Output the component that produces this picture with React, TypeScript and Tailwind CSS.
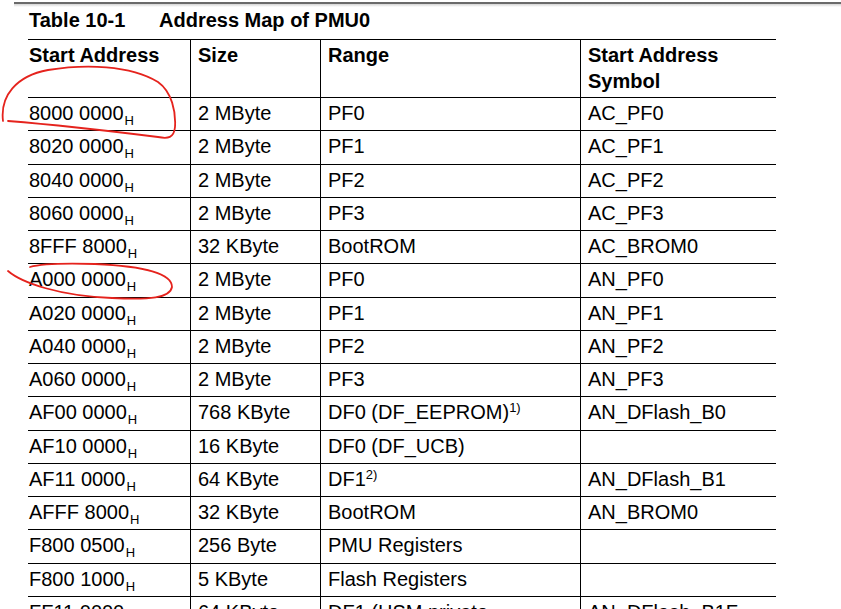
import React from 'react';

type Row = {
  addr: string;
  size: string;
  range: string;
  sup?: string;
  symbol: string;
};

const rows: Row[] = [
  { addr: '8000 0000', size: '2 MByte', range: 'PF0', symbol: 'AC_PF0' },
  { addr: '8020 0000', size: '2 MByte', range: 'PF1', symbol: 'AC_PF1' },
  { addr: '8040 0000', size: '2 MByte', range: 'PF2', symbol: 'AC_PF2' },
  { addr: '8060 0000', size: '2 MByte', range: 'PF3', symbol: 'AC_PF3' },
  { addr: '8FFF 8000', size: '32 KByte', range: 'BootROM', symbol: 'AC_BROM0' },
  { addr: 'A000 0000', size: '2 MByte', range: 'PF0', symbol: 'AN_PF0' },
  { addr: 'A020 0000', size: '2 MByte', range: 'PF1', symbol: 'AN_PF1' },
  { addr: 'A040 0000', size: '2 MByte', range: 'PF2', symbol: 'AN_PF2' },
  { addr: 'A060 0000', size: '2 MByte', range: 'PF3', symbol: 'AN_PF3' },
  { addr: 'AF00 0000', size: '768 KByte', range: 'DF0 (DF_EEPROM)', sup: '1)', symbol: 'AN_DFlash_B0' },
  { addr: 'AF10 0000', size: '16 KByte', range: 'DF0 (DF_UCB)', symbol: '' },
  { addr: 'AF11 0000', size: '64 KByte', range: 'DF1', sup: '2)', symbol: 'AN_DFlash_B1' },
  { addr: 'AFFF 8000', size: '32 KByte', range: 'BootROM', symbol: 'AN_BROM0' },
  { addr: 'F800 0500', size: '256 Byte', range: 'PMU Registers', symbol: '' },
  { addr: 'F800 1000', size: '5 KByte', range: 'Flash Registers', symbol: '' },
  { addr: 'FF11 0000', size: '64 KByte', range: 'DF1 (HSM private', symbol: 'AN_DFlash_B1F' },
];

const grid = 'grid grid-cols-[162px_130px_260px_196px] border-b border-black';

const App: React.FC = () => {
  return (
    <div
      className="relative h-[609px] w-[841px] overflow-hidden bg-white text-black"
      style={{ fontFamily: '"Liberation Sans", Arial, sans-serif' }}
    >
      {/* window edge */}
      <div className="ml-[14px] mt-[2px] h-[2px] bg-[#6a6a6a]" />
      <div className="ml-[14px] h-[3px] bg-gradient-to-b from-[#d4d4d4] to-white" />

      <div className="pl-[28px]">
        {/* Title */}
        <div className="mt-[2px] flex h-[23px] pl-[1px] text-[20px] font-bold leading-[23px]">
          <span className="w-[130px]">Table 10-1</span>
          <span>Address Map of PMU0</span>
        </div>

        {/* Table */}
        <div className="mt-[7px] w-[748px] border-t border-black text-[20px] leading-[26px]">
          <div className={`${grid} h-[58px] font-bold`}>
            <div className="pl-[1px] pt-[2px]">Start Address</div>
            <div className="border-l border-black pl-[7px] pt-[2px]">Size</div>
            <div className="border-l border-black pl-[7px] pt-[2px]">Range</div>
            <div className="border-l border-black pl-[7px] pt-[2px]">
              Start Address
              <br />
              Symbol
            </div>
          </div>
          {rows.map((r, i) => (
            <div key={i} className={`${grid} h-[33.27px]`}>
              <div className="whitespace-nowrap pl-[1px] pt-[2px]">
                {r.addr}
                <span className="ml-[1px] align-[-5px] text-[13px] leading-none">H</span>
              </div>
              <div className="whitespace-nowrap border-l border-black pl-[7px] pt-[2px]">{r.size}</div>
              <div className="whitespace-nowrap border-l border-black pl-[7px] pt-[2px]">
                {r.range}
                {r.sup && <span className="align-[7px] text-[13px] leading-none">{r.sup}</span>}
              </div>
              <div className="whitespace-nowrap border-l border-black pl-[7px] pt-[2px]">{r.symbol}</div>
            </div>
          ))}
        </div>
      </div>

      {/* hand-drawn red marks */}
      <svg
        className="pointer-events-none absolute left-0 top-0"
        width="841"
        height="609"
        viewBox="0 0 841 609"
        fill="none"
      >
        <path
          d="M 3 121 C 0 96, 16 76, 48 70 C 85 64, 130 65, 158 82 C 172 92, 176 112, 175 127 C 174 138, 168 139, 158 137 C 118 132, 70 126, 8 121"
          stroke="#e5231d"
          strokeWidth="1.8"
          strokeLinecap="round"
        />
        <path
          d="M 8 271 C 22 283, 60 296, 112 298 C 150 300, 170 298, 172 287 C 172 272, 140 266, 95 264 C 62 263, 40 264, 30 267"
          stroke="#e5231d"
          strokeWidth="1.8"
          strokeLinecap="round"
        />
      </svg>
    </div>
  );
};

export default App;
